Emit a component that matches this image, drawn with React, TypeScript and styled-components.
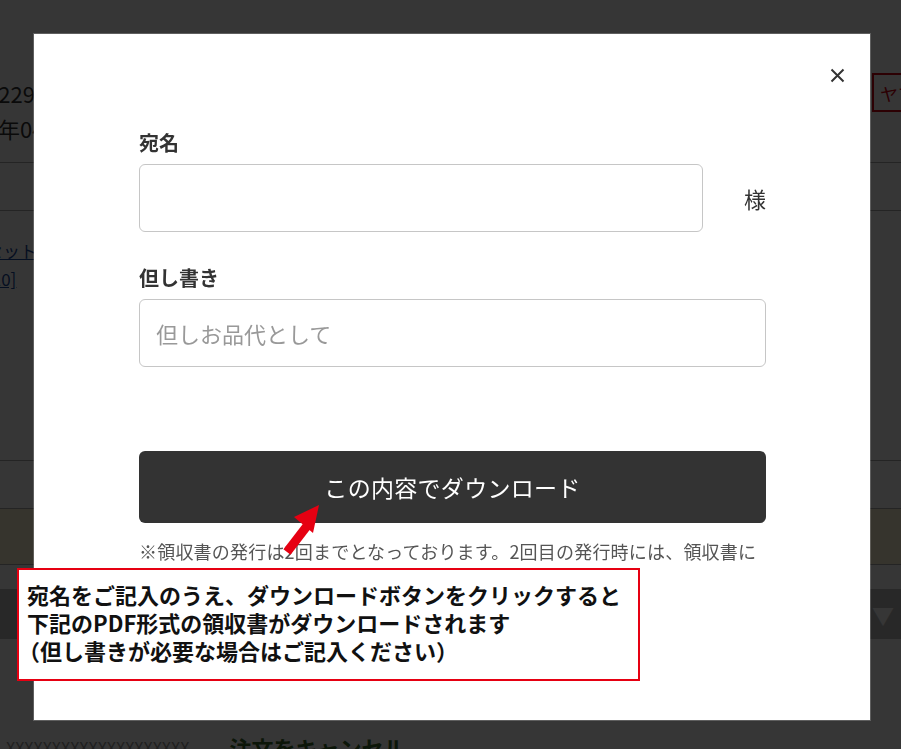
import styled, { createGlobalStyle } from 'styled-components';

const GlobalStyle = createGlobalStyle`
  html, body {
    margin: 0;
    height: 749px;
    overflow: hidden;
    background: #fff;
    font-family: "Noto Sans CJK JP", "Noto Sans", sans-serif;
  }
`;

export default function App() {
  return (
    <>
      <GlobalStyle />
      <Page>
        <SummaryRow>
          <Price>¥22950（税込）</Price>
          <CarrierButton>ヤマト運輸</CarrierButton>
        </SummaryRow>
        <DateText>年04月10日</DateText>
        <Divider $top={18} />
        <Divider $top={47} />
        <LinkText $top={28}>セット商品のご案内</LinkText>
        <LinkText $top={4}>[10]</LinkText>
        <Divider $top={169} />
        <Divider $top={47} />
        <NoticeBand />
        <Divider $top={0} />
        <StatusBar>▼ ジャンル</StatusBar>
        <FooterRow>
          <MutedText>XXXXXXXXXXXXXXXXXXXX</MutedText>
          <CancelText>注文をキャンセル</CancelText>
        </FooterRow>
      </Page>

      <Overlay>
        <Modal>
          <CloseButton aria-label="閉じる">
            <svg width="15" height="15" viewBox="0 0 15 15">
              <path d="M1.5 1.5 L13.5 13.5 M13.5 1.5 L1.5 13.5" stroke="#333" strokeWidth="2" />
            </svg>
          </CloseButton>
          <Form>
            <Label>宛名</Label>
            <NameRow>
              <TextInput $width="564px" />
              <Honorific>様</Honorific>
            </NameRow>
            <Label $spaced>但し書き</Label>
            <TextInput $width="100%" placeholder="但しお品代として" />
            <DownloadButton>この内容でダウンロード</DownloadButton>
            <Note>
              ※領収書の発行は2回までとなっております。2回目の発行時には、領収書に「再発行」と記載されます。
            </Note>
          </Form>
        </Modal>
      </Overlay>

      <Pointer width="44" height="56" viewBox="0 0 44 56">
        <path d="M4 52 L24 26" stroke="#e60012" strokeWidth="9" />
        <polygon points="36,5 11,17 30,33" fill="#e60012" />
      </Pointer>

      <Callout>
        <CalloutLine>宛名をご記入のうえ、ダウンロードボタンをクリックすると</CalloutLine>
        <CalloutLine>下記のPDF形式の領収書がダウンロードされます</CalloutLine>
        <CalloutLine $hang>（但し書きが必要な場合はご記入ください）</CalloutLine>
      </Callout>
    </>
  );
}

/* background page, dimmed behind the dialog */

const Page = styled.div`
  width: 1000px;
  margin-left: -14px;
  padding-top: 73px;
  color: #333;
`;

const SummaryRow = styled.div`
  display: flex;
  align-items: center;
  justify-content: space-between;
  height: 39px;
`;

const Price = styled.span`
  font-size: 22px;
  font-weight: 400;
`;

const CarrierButton = styled.span`
  box-sizing: border-box;
  width: 100px;
  height: 39px;
  margin-right: 14px;
  border: 2px solid #d0000f;
  color: #d0000f;
  font-size: 18px;
  white-space: nowrap;
  display: flex;
  align-items: center;
  padding-left: 6px;
`;

const DateText = styled.div`
  font-size: 22px;
  line-height: 32px;
  padding-left: 12px;
`;

const Divider = styled.div<{ $top: number }>`
  height: 1px;
  background: #aaa;
  margin-top: ${(p) => p.$top}px;
`;

const LinkText = styled.div<{ $top: number }>`
  margin-top: ${(p) => p.$top}px;
  font-size: 17px;
  line-height: 24px;
  color: #1a4a9a;
  text-decoration: underline;
`;

const NoticeBand = styled.div`
  height: 55px;
  background: #fff4d6;
`;

const StatusBar = styled.div`
  margin-top: 24px;
  height: 50px;
  background: #bdbdbd;
  color: #fff;
  font-size: 22px;
  display: flex;
  align-items: center;
  padding-left: 886px;
  box-sizing: border-box;
  white-space: nowrap;
  overflow: hidden;
`;

const FooterRow = styled.div`
  display: flex;
  align-items: center;
  gap: 40px;
  margin-top: 92px;
  padding-left: 20px;
`;

const MutedText = styled.span`
  font-size: 16px;
  color: #999;
`;

const CancelText = styled.span`
  font-size: 22px;
  font-weight: 700;
  color: #3b6b2a;
`;

/* dialog */

const Overlay = styled.div`
  position: fixed;
  inset: 0;
  background: rgba(0, 0, 0, 0.79);
  padding: 34px 31px 29px 34px;
  display: flex;
`;

const Modal = styled.div`
  position: relative;
  flex: 1;
  background: #fff;
  padding: 94px 0 0 105px;
  box-shadow: 0 0 0 1px rgba(255, 255, 255, 0.2);
`;

const CloseButton = styled.button`
  position: absolute;
  top: 33px;
  right: 24px;
  width: 17px;
  height: 17px;
  padding: 0;
  border: 0;
  background: none;
  display: flex;
  align-items: center;
  justify-content: center;
  cursor: pointer;
`;

const Form = styled.div`
  width: 627px;
  display: flex;
  flex-direction: column;
`;

const Label = styled.div<{ $spaced?: boolean }>`
  margin-top: ${(p) => (p.$spaced ? '31px' : '0')};
  margin-bottom: 6px;
  font-size: 20px;
  line-height: 30px;
  font-weight: 700;
  color: #333;
`;

const NameRow = styled.div`
  display: flex;
  align-items: center;
  justify-content: space-between;
`;

const TextInput = styled.input<{ $width: string }>`
  box-sizing: border-box;
  width: ${(p) => p.$width};
  height: 68px;
  border: 1px solid #c6c6c6;
  border-radius: 6px;
  padding: 0 16px;
  font-family: inherit;
  font-size: 22px;
  color: #333;
  outline: none;

  &::placeholder {
    color: #999;
  }
`;

const Honorific = styled.span`
  font-size: 22px;
  color: #333;
`;

const DownloadButton = styled.button`
  margin-top: 84px;
  height: 72px;
  border: 0;
  border-radius: 6px;
  background: #333;
  color: #fff;
  font-family: inherit;
  font-size: 23px;
  letter-spacing: 0.3px;
  cursor: pointer;
`;

const Note = styled.p`
  margin: 14px 0 0;
  font-size: 18px;
  line-height: 29px;
  letter-spacing: 0.2px;
  color: #555;
`;

/* annotation laid over the screenshot */

const Pointer = styled.svg`
  position: absolute;
  left: 283px;
  top: 500px;
`;

const Callout = styled.div`
  position: absolute;
  left: 17px;
  top: 568px;
  box-sizing: border-box;
  width: 623px;
  height: 113px;
  padding: 10px 0 0 8px;
  background: #fff;
  border: 2px solid #e60012;
  font-size: 22px;
  line-height: 28px;
  font-weight: 700;
  color: #111;
  white-space: nowrap;
`;

const CalloutLine = styled.div<{ $hang?: boolean }>`
  margin-left: ${(p) => (p.$hang ? '-9px' : '0')};
`;
